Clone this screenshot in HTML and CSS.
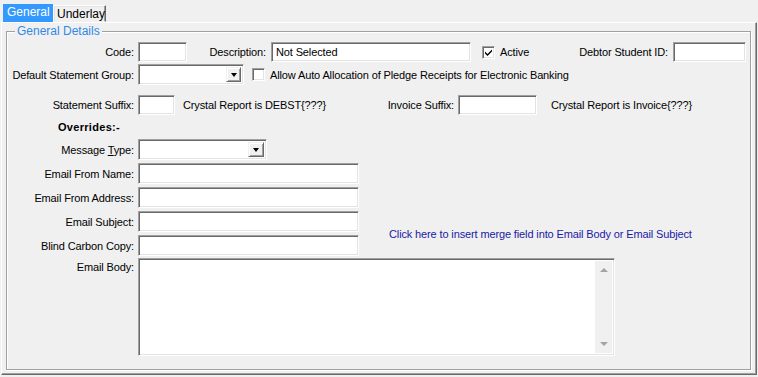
FILE: index.html
```html
<!DOCTYPE html>
<html>
<head>
<meta charset="utf-8">
<link rel="stylesheet" href="styles.css">
</head>
<body>
<div class="tabs">
  <div class="tab tab-active">General</div>
  <div class="tab">Underlay</div>
</div>
<div class="panel">
  <div class="group">
    <div class="group-title">General Details</div>

    <div class="row row1">
      <span class="lbl">Code:</span>
      <span class="input w-code"></span>
      <span class="lbl lbl-desc">Description:</span>
      <span class="input w-desc"><span class="val">Not Selected</span></span>
      <span class="chk chk-active checked"><svg width="9" height="9" viewBox="0 0 9 9"><path d="M1 3.5 L3.5 6 L8 1.5 L8 3.5 L3.5 8 L1 5.5 Z" fill="#000"/></svg></span>
      <span class="chk-text w-active">Active</span>
      <span class="lbl lbl-debtor">Debtor Student ID:</span>
      <span class="input w-debtor"></span>
    </div>

    <div class="row row2">
      <span class="lbl">Default Statement Group:</span>
      <span class="combo w-group"><span class="combo-btn"><span class="tri"></span></span></span>
      <span class="chk chk-allow"></span>
      <span class="chk-text">Allow Auto Allocation of Pledge Receipts for Electronic Banking</span>
    </div>

    <div class="row row3">
      <span class="lbl">Statement Suffix:</span>
      <span class="input w-suffix"></span>
      <span class="note w-note">Crystal Report is DEBST{???}</span>
      <span class="lbl lbl-inv">Invoice Suffix:</span>
      <span class="input w-inv"></span>
      <span class="note note-inv">Crystal Report is Invoice{???}</span>
    </div>

    <div class="overrides">Overrides:-</div>

    <div class="row row-msg">
      <span class="lbl">Message <u>T</u>ype:</span>
      <span class="combo w-msg"><span class="combo-btn"><span class="tri"></span></span></span>
    </div>

    <div class="email-grid">
      <span class="lbl r1">Email From Name:</span>
      <span class="input w-email r1"></span>
      <span class="lbl r2">Email From Address:</span>
      <span class="input w-email r2"></span>
      <span class="lbl r3">Email Subject:</span>
      <span class="input w-email r3"></span>
      <span class="lbl r4">Blind Carbon Copy:</span>
      <span class="input w-email r4"></span>
      <span class="link">Click here to insert merge field into Email Body or Email Subject</span>
    </div>

    <div class="row row-body">
      <span class="lbl lbl-body">Email Body:</span>
      <span class="input textarea">
        <span class="textarea-fill"></span>
        <span class="vscroll">
          <span class="arr arr-up"></span>
          <span class="arr arr-down"></span>
        </span>
      </span>
    </div>
  </div>
</div>
</body>
</html>
```

FILE: styles.css
```css
* { box-sizing: border-box; }
html, body {
  margin: 0;
  padding: 0;
}
body {
  width: 758px;
  height: 377px;
  overflow: hidden;
  background: #f0f0f0;
  font-family: "Liberation Sans", Arial, sans-serif;
  font-size: 11px;
  letter-spacing: -0.13px;
  color: #000;
}

/* Tabs */
.tabs {
  display: flex;
  align-items: flex-end;
  height: 22px;
  padding-left: 3px;
}
.tab {
  height: 17px;
  width: 53px;
  padding-left: 3px;
  line-height: 16px;
  font-size: 12px;
  letter-spacing: 0;
  border: 1px solid;
  border-color: #ffffff #696969 transparent #ffffff;
  box-shadow: inset -1px 0 #a0a0a0, inset 1px 1px #e3e3e3;
}
.tab-active {
  width: 50px;
  height: 18px;
  padding-left: 4px;
  background: #3399ff;
  color: #fff;
  border: none;
  box-shadow: none;
  line-height: 17px;
}

/* Panel */
.panel {
  margin-left: 1px;
  width: 756px;
  height: 353px;
  border: 1px solid;
  border-color: #ffffff #696969 #696969 #ffffff;
  box-shadow: inset -1px -1px #a0a0a0;
  padding: 8px 0 0 4px;
}

/* Group box */
.group {
  position: relative;
  width: 745px;
  height: 339px;
  border: 1px solid #a0a0a0;
  box-shadow: inset 1px 1px #ffffff, 1px 1px #ffffff;
  padding-top: 10px;
}
.group-title {
  position: absolute;
  top: -7px;
  left: 8px;
  padding: 0 2px;
  background: #f0f0f0;
  color: #3388e6;
  font-size: 12px;
  letter-spacing: 0;
  line-height: 13px;
}

/* Rows */
.row {
  display: flex;
  align-items: center;
}
.lbl {
  width: 127px;
  margin-right: 4px;
  text-align: right;
  white-space: nowrap;
  flex: none;
}
.input, .combo {
  display: block;
  flex: none;
  position: relative;
  height: 20px;
  background: #fff;
  border: 1px solid;
  border-color: #a0a0a0 #ffffff #ffffff #a0a0a0;
  box-shadow: inset 1px 1px #696969, inset -1px -1px #e3e3e3;
}
.val {
  display: block;
  padding-left: 4px;
  line-height: 18px;
}

.row1 { height: 20px; }
.w-code { width: 49px; }
.lbl-desc { width: 79px; margin-right: 5px; }
.w-desc { width: 200px; }
.chk-active { margin-left: 11px; }
.w-active { width: 40px; }
.lbl-debtor { width: 128px; margin-right: 5px; }
.w-debtor { width: 73px; }

.chk {
  display: flex;
  align-items: center;
  justify-content: center;
  flex: none;
  width: 13px;
  height: 13px;
  background: #fff;
  border: 1px solid;
  border-color: #a0a0a0 #ffffff #ffffff #a0a0a0;
  box-shadow: inset 1px 1px #696969, inset -1px -1px #e3e3e3;
}
.chk-text {
  margin-left: 5px;
  white-space: nowrap;
  flex: none;
}

.row2 { height: 21px; margin-top: 2px; }
.combo { height: 21px; }
.w-group { width: 106px; }
.combo-btn {
  position: absolute;
  top: 2px;
  right: 2px;
  bottom: 2px;
  width: 15px;
  background: #f0f0f0;
  border: 1px solid;
  border-color: #f0f0f0 #696969 #696969 #f0f0f0;
  box-shadow: inset 1px 1px #ffffff, inset -1px -1px #a0a0a0;
  display: flex;
  align-items: center;
  justify-content: center;
}
.tri {
  width: 0;
  height: 0;
  border-left: 3.5px solid transparent;
  border-right: 3.5px solid transparent;
  border-top: 4px solid #000;
  margin-top: 1px;
}
.chk-allow { margin-left: 8px; }

.row3 { height: 20px; margin-top: 10px; }
.w-suffix { width: 37px; }
.note { white-space: nowrap; flex: none; }
.w-note { width: 200px; margin-left: 8px; }
.lbl-inv { width: 71px; }
.w-inv { width: 79px; }
.note-inv { margin-left: 14px; }

.overrides {
  height: 14px;
  margin-top: 5px;
  padding-left: 51px;
  font-weight: bold;
  letter-spacing: 0.3px;
  line-height: 14px;
}

.row-msg { height: 21px; margin-top: 5px; }
.w-msg { width: 129px; }
.w-msg .combo-btn { width: 16px; }

.email-grid {
  display: grid;
  grid-template-columns: 127px 221px auto;
  grid-template-rows: repeat(4, 21px);
  column-gap: 4px;
  row-gap: 3px;
  margin-top: 3px;
  align-items: center;
}
.email-grid .lbl { margin-right: 0; grid-column: 1; }
.email-grid .input { grid-column: 2; }
.r1 { grid-row: 1; }
.r2 { grid-row: 2; }
.r3 { grid-row: 3; }
.r4 { grid-row: 4; }
.w-email { width: 221px; height: 21px; }
.link {
  grid-column: 3;
  grid-row: 3 / span 2;
  align-self: center;
  margin-left: 26px;
  color: #1a1aa6;
  white-space: nowrap;
}

.row-body { align-items: flex-start; margin-top: 2px; }
.lbl-body { padding-top: 3px; }
.textarea {
  width: 477px;
  height: 98px;
  display: flex;
}
.textarea-fill { flex: 1; }
.vscroll {
  width: 17px;
  margin: 2px 2px 2px 0;
  background: #f0f0f0;
  display: flex;
  flex-direction: column;
  justify-content: space-between;
  align-items: center;
  padding: 7px 0 7px;
}
.arr {
  width: 0;
  height: 0;
  border-left: 4px solid transparent;
  border-right: 4px solid transparent;
}
.arr-up { border-bottom: 4px solid #a3a3a3; }
.arr-down { border-top: 4px solid #a3a3a3; }
```
